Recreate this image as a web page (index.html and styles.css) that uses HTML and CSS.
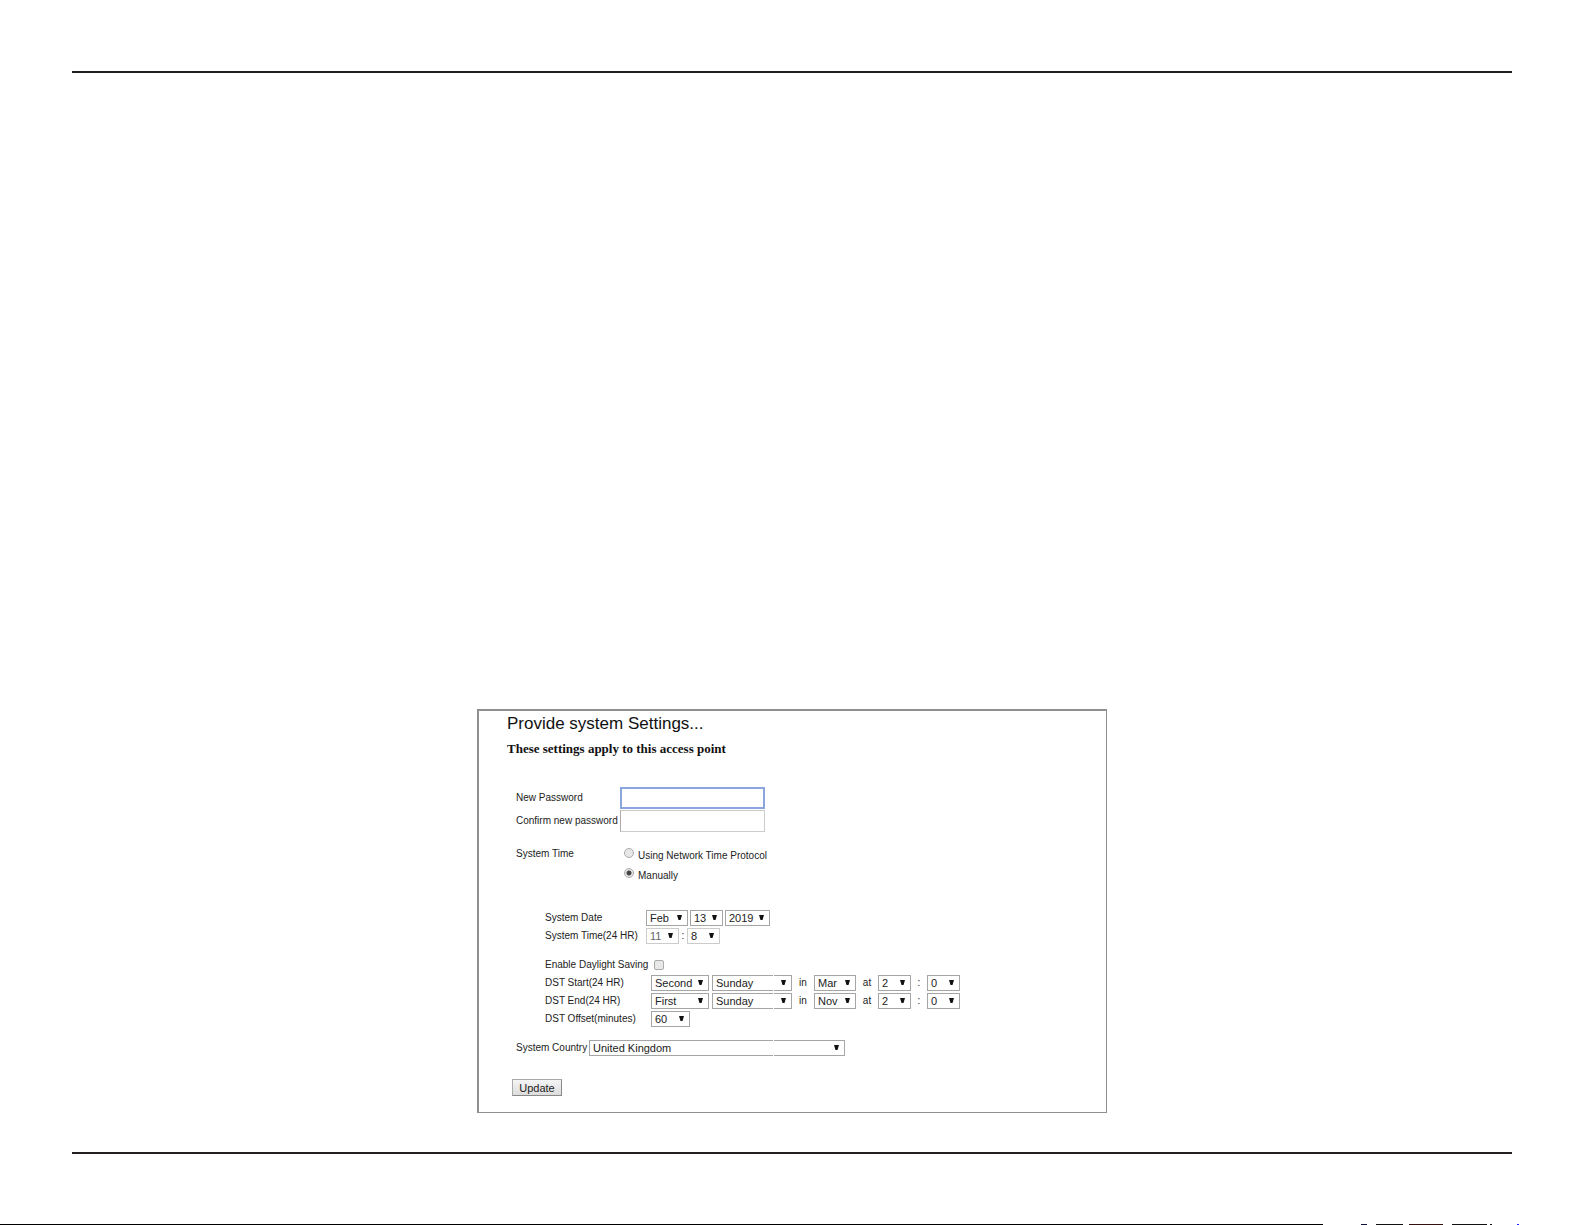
FILE: index.html
```html
<!DOCTYPE html>
<html lang="en">
<head>
<meta charset="UTF-8">
<meta name="viewport" content="width=device-width, initial-scale=1.0">
<title>System Settings</title>
<link rel="stylesheet" href="styles.css">
</head>
<body>
<div class="page">
  <main class="panel">
    <h1>Provide system Settings...</h1>
    <h2>These settings apply to this access point</h2>
    <form>
      <div class="passwords">
        <label for="pw">New Password</label>
        <input type="password" id="pw" class="text active">
        <label for="pw2">Confirm new password</label>
        <input type="password" id="pw2" class="text">
      </div>

      <div class="mode">
        <span>System Time</span>
        <div class="options">
          <label><input type="radio" name="mode"> Using Network Time Protocol</label>
          <label><input type="radio" name="mode" checked> Manually</label>
        </div>
      </div>

      <div class="rows date">
        <div class="row">
          <label class="name" for="month">System Date</label>
          <select id="month" class="w42"><option>Feb</option></select>
          <select class="w33" aria-label="Day"><option>13</option></select>
          <select class="w45" aria-label="Year"><option>2019</option></select>
        </div>
        <div class="row light">
          <label class="name" for="hour">System Time(24 HR)</label>
          <select id="hour" class="w33 dim"><option>11</option></select>
          <span>:</span>
          <select class="w33" aria-label="Minute"><option>8</option></select>
        </div>
      </div>

      <div class="lower">
        <div class="rows dst">
          <div class="row">
            <label class="name" for="dst">Enable Daylight Saving</label>
            <input type="checkbox" id="dst">
          </div>
          <div class="row">
            <label class="name" for="start">DST Start(24 HR)</label>
            <select id="start" class="w58"><option>Second</option></select>
            <select class="w80" aria-label="Start day"><option>Sunday</option></select>
            <span class="word">in</span>
            <select class="w42" aria-label="Start month"><option>Mar</option></select>
            <span class="word">at</span>
            <select class="w33" aria-label="Start hour"><option>2</option></select>
            <span class="colon">:</span>
            <select class="w33" aria-label="Start minute"><option>0</option></select>
          </div>
          <div class="row">
            <label class="name" for="end">DST End(24 HR)</label>
            <select id="end" class="w58"><option>First</option></select>
            <select class="w80" aria-label="End day"><option>Sunday</option></select>
            <span class="word">in</span>
            <select class="w42" aria-label="End month"><option>Nov</option></select>
            <span class="word">at</span>
            <select class="w33" aria-label="End hour"><option>2</option></select>
            <span class="colon">:</span>
            <select class="w33" aria-label="End minute"><option>0</option></select>
          </div>
          <div class="row">
            <label class="name" for="offset">DST Offset(minutes)</label>
            <select id="offset" class="w39"><option>60</option></select>
          </div>
        </div>
        <div class="row country">
          <label class="name" for="country">System Country</label>
          <select id="country" class="w256"><option>United Kingdom</option></select>
        </div>
      </div>

      <button type="button">Update</button>
    </form>
  </main>
</div>
<footer class="strip"></footer>
</body>
</html>
```
FILE: styles.css
```css
* {
  box-sizing: border-box;
}

body {
  margin: 0;
  min-height: 100vh;
  display: flex;
  flex-direction: column;
  justify-content: space-between;
  background-color: #fff;
  color: #222;
  font-family: "Liberation Sans", Arial, sans-serif;
  font-size: 10px;
  line-height: 16px;
}

.page {
  margin: 71px 73px 0 72px;
  padding: 636px 0 39px;
  border-top: 2px solid #231f20;
  border-bottom: 2px solid #231f20;
}

.panel {
  width: 630px;
  margin: 0 auto;
  padding: 1px 28px 16px;
  border: 1px solid #8f8f8f;
  border-width: 2px 1px 1px 2px;
}

h1 {
  margin: 0;
  color: #111;
  font-size: 17px;
  font-weight: normal;
  line-height: 24px;
}

h2 {
  margin: 4px 0 0;
  color: #111;
  font-family: "Liberation Serif", "Times New Roman", serif;
  font-size: 13px;
  line-height: 18px;
}

form {
  margin-top: 29px;
  padding-left: 9px;
}

label {
  white-space: nowrap;
}

.passwords {
  display: grid;
  grid-template-columns: 104px 145px;
  row-gap: 1px;
  align-items: center;
}

.text {
  height: 22px;
  margin: 0;
  padding: 0 2px;
  border: 1px solid #ccc;
  border-left-color: #aaa;
  font: inherit;
}

.text.active {
  border: 2px solid #8aa6dc;
  outline: none;
}

.mode {
  display: flex;
  margin-top: 14px;
}

.mode > span {
  width: 108px;
}

.options {
  display: grid;
  row-gap: 2px;
}

.options label {
  display: flex;
  gap: 4px;
  padding-top: 2px;
}

input[type="radio"],
input[type="checkbox"] {
  appearance: none;
  width: 10px;
  height: 10px;
  margin: 0;
  border: 1px solid #aaa;
  background-color: #e8e8e8;
}

input[type="radio"] {
  border-radius: 50%;
}

input[type="radio"]:checked {
  background-image: radial-gradient(circle, #444 2px, transparent 3px);
}

input[type="checkbox"] {
  margin: 0 0 0 3px;
  border-radius: 2px;
}

.rows {
  display: grid;
  row-gap: 2px;
  padding-left: 29px;
}

.row {
  display: flex;
  align-items: center;
  height: 16px;
}

.date {
  margin-top: 26px;
}

.date .row {
  gap: 2px;
}

.date .name {
  width: 99px;
}

.date span {
  width: 4px;
  text-align: center;
}

.dst .name {
  width: 106px;
}

.dst .w58 {
  margin-right: 3px;
}

.word {
  width: 22px;
  text-align: center;
}

.colon {
  width: 16px;
  text-align: center;
}

.lower {
  position: relative;
  margin-top: 13px;
}

/* seam through the wide drop-downs */
.lower::after {
  content: "";
  position: absolute;
  top: 18px;
  bottom: 0;
  left: 257px;
  width: 1px;
  background-color: #fff;
}

.country {
  margin-top: 13px;
}

.country .name {
  width: 73px;
}

select {
  appearance: none;
  height: 16px;
  margin: 0;
  padding: 0 0 0 3px;
  border: 1px solid #a5a5a5;
  border-radius: 0;
  background: #fff url("data:image/svg+xml,%3Csvg xmlns='http://www.w3.org/2000/svg' width='5' height='5'%3E%3Cpath d='M0 0h5L3.5 5h-2z' fill='%23111'/%3E%3C/svg%3E") no-repeat right 5px top 4px;
  color: #222;
  font: 11px "Liberation Sans", Arial, sans-serif;
}

.light select {
  border-color: #ccc;
}

.light .dim {
  color: #666;
}

.w33 {
  width: 33px;
}

.w39 {
  width: 39px;
}

.w42 {
  width: 42px;
}

.w45 {
  width: 45px;
}

.w58 {
  width: 58px;
}

.w80 {
  width: 80px;
}

.w256 {
  width: 256px;
}

button {
  display: block;
  width: 50px;
  height: 17px;
  margin: 23px 0 0 -4px;
  padding: 0;
  border: 1px solid #aaa;
  border-right-color: #888;
  border-bottom-color: #888;
  background: linear-gradient(#f4f4f4, #ddd);
  color: #222;
  font: 11px "Liberation Sans", Arial, sans-serif;
}

/* broken rule along the bottom edge */
.strip {
  height: 1px;
  background: linear-gradient(to right, #000 1323px, #fff 1323px, #fff 1361px, #113 1361px, #113 1367px, #fff 1367px, #fff 1376px, #111 1376px, #111 1403px, #fff 1403px, #fff 1409px, #311 1409px, #311 1443px, #fff 1443px, #fff 1452px, #111 1452px, #111 1487px, #fff 1487px, #fff 1490px, #111 1490px, #111 1492px, #fff 1492px, #fff 1517px, #22f 1517px, #22f 1519px, #fff 1519px);
}
```
